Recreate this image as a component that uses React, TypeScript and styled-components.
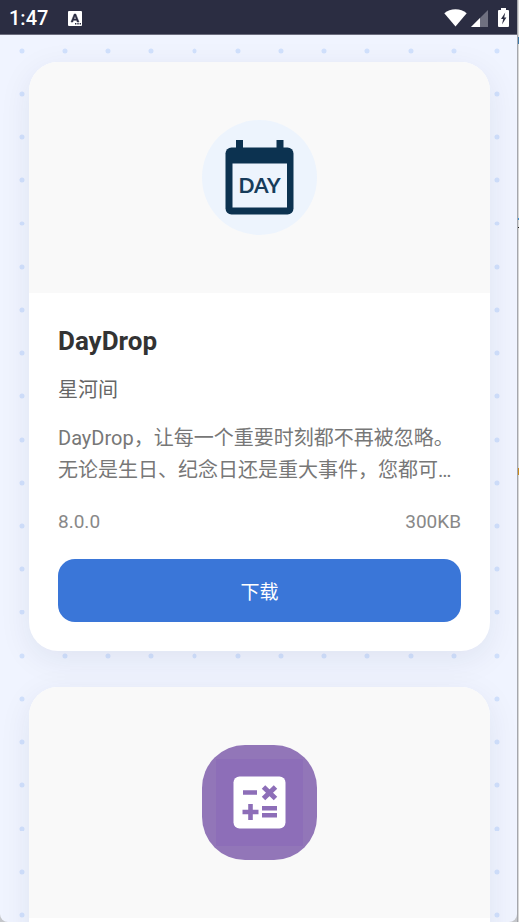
import React from "react";
import styled, { createGlobalStyle } from "styled-components";

const GlobalStyle = createGlobalStyle`
  * { box-sizing: border-box; }
  html, body, #root { height: 100%; }
  body {
    margin: 0;
    background: #c4c6ca;
    font-family: Roboto, "Noto Sans CJK SC", sans-serif;
  }
`;

const dotTile =
  "data:image/svg+xml," +
  encodeURIComponent(
    '<svg xmlns="http://www.w3.org/2000/svg" viewBox="0 0 40 40"><circle cx="20" cy="20" r="2.3" fill="#d1e1fd"/></svg>'
  );

const Desktop = styled.div`
  display: flex;
  height: 100vh;
  overflow: hidden;
  background: #c4c6ca;
`;

const Screen = styled.div`
  flex: 1;
  min-width: 0;
  display: flex;
  flex-direction: column;
  overflow: hidden;
  border-radius: 0 0 8px 8px;
  background: #f0f4ff;
`;

const WindowEdge = styled.div`
  width: 2px;
  border-left: 1px solid #a5a7ad;
  background:
    linear-gradient(#3d78a8, #3d78a8) 0 37px / 2px 7px no-repeat,
    linear-gradient(#3d8fd0, #3d8fd0) 0 218px / 2px 2px no-repeat,
    linear-gradient(#222, #222) 0 227px / 2px 1px no-repeat,
    linear-gradient(#c98a1c, #c98a1c) 0 468px / 2px 7px no-repeat,
    #d8d8d8;
`;

const StatusBar = styled.header`
  flex: none;
  display: flex;
  align-items: center;
  gap: 20px;
  height: 35px;
  padding: 2px 8px 0 9px;
  background: #2b2d42;
  border-bottom: 1px solid #6b6c7d;
  color: #fff;
`;

const Clock = styled.time`
  font-size: 20px;
  line-height: 24px;
  font-weight: 500;
`;

const StatusIcons = styled.div`
  display: flex;
  align-items: center;
  gap: 10px;
  margin-left: auto;
`;

const Reception = styled.div`
  display: flex;
  align-items: center;
  gap: 4px;
`;

const Feed = styled.main`
  flex: 1;
  display: flex;
  flex-direction: column;
  gap: 36px;
  padding: 27px 27px 0 29px;
  overflow: hidden;
  background-image: url("${dotTile}");
  background-size: 8.36% auto;
  background-position: 0 -6px;
`;

const Card = styled.article`
  flex: none;
  overflow: hidden;
  border-radius: 29px;
  background: #fff;
  box-shadow: 0 8px 32px rgba(31, 38, 75, 0.08);
`;

const Cover = styled.div`
  display: flex;
  align-items: center;
  justify-content: center;
  height: 231px;
  background: #f9f9f9;
`;

const AppIcon = styled.div<{ $color: string; $radius: string }>`
  width: 115px;
  height: 115px;
  overflow: hidden;
  border-radius: ${(p) => p.$radius};
  background: ${(p) => p.$color};

  svg { display: block; }
`;

const CardBody = styled.div`
  display: flex;
  flex-direction: column;
  padding: 29px;
`;

const Title = styled.h2`
  margin: 0 0 14px;
  color: #333;
  font-size: 26px;
  line-height: 38px;
  font-weight: 700;
`;

const Author = styled.p`
  margin: 0 0 16px;
  color: #666;
  font-size: 20px;
  line-height: 32px;
`;

const Description = styled.p`
  margin: 0 0 23px;
  color: #777;
  font-size: 20px;
  line-height: 32px;
`;

const Meta = styled.div`
  display: flex;
  justify-content: space-between;
  margin-bottom: 24px;
  color: #888;
  font-size: 19px;
  line-height: 26px;
`;

const DownloadButton = styled.button`
  height: 63px;
  border: 0;
  border-radius: 17px;
  background: #3a76d8;
  color: #fff;
  font: inherit;
  font-size: 19px;
  cursor: pointer;
`;

const KeyboardIcon = () => (
  <svg width="14" height="15" viewBox="0 0 14 15" aria-hidden="true">
    <rect width="14" height="15" rx="1" fill="#fff" />
    <path d="M3 11 6.200 3h1.600L11 11H9.200L8.600 9.300H5.400L4.800 11ZM5.900 7.900h2.200L7 4.900Z" fill="#2b2d42" stroke="#2b2d42" strokeWidth="0.500" fillRule="evenodd" />
    <path d="M7 12h1.400v1.500H7zM9.300 12h1.400v1.500H9.300zM11.600 12H13v1.500h-1.400z" fill="#2b2d42" />
  </svg>
);

const WifiIcon = () => (
  <svg width="23" height="18" viewBox="0 0 23 18" aria-hidden="true">
    <path d="M11.500 17.500.3 4.200C3.400 1.700 7.200.3 11.500.3s8.100 1.400 11.200 3.900Z" fill="#fff" />
  </svg>
);

const SignalIcon = () => (
  <svg width="17" height="17" viewBox="0 0 17 17" aria-hidden="true">
    <path d="M0 17 17 0v17Z" fill="#6f7080" />
    <path d="M0 17 9 8v9Z" fill="#fff" />
  </svg>
);

const BatteryIcon = () => (
  <svg width="11" height="20" viewBox="0 0 11 20" aria-hidden="true">
    <path d="M3 0h5v2h2q1 0 1 1v15q0 1-1 1H1q-1 0-1-1V3q0-1 1-1h2Z" fill="#fff" />
    <path d="M7.200 4.500 3 11h2.200l-1.200 5.500L8.400 9.500H6.200Z" fill="#2b2d42" />
  </svg>
);

const CalendarArt = () => (
  <svg width="115" height="115" viewBox="0 0 115 115" aria-hidden="true">
    <path d="M34 20h7v8h-7zM74.500 20h7v8h-7z" fill="#0c3250" />
    <rect x="23.500" y="27.500" width="68" height="67" rx="6" fill="#0c3250" />
    <path d="M30.500 43.500h54.500v44h-54.500z" fill="#edf4fd" />
    <text x="57.500" y="73" textAnchor="middle" fontFamily="Lato, sans-serif" fontWeight="700" fontSize="21" fill="#173c5a">
      DAY
    </text>
  </svg>
);

const CalculatorArt = () => (
  <svg width="115" height="115" viewBox="0 0 115 115" aria-hidden="true">
    <rect x="14" y="14" width="87" height="87" fill="#8d6eb8" />
    <rect x="31.500" y="31.500" width="52" height="52" rx="6" fill="#fff" />
    <g stroke="#8d6eb8" strokeWidth="4.600">
      <path d="M41 47.500h14M40.500 67h16M48.500 59v16M60 63.300h15M60 70.300h15" />
      <path d="m61.500 42 12 11.500M73.500 42l-12 11.500" strokeWidth="5" />
    </g>
  </svg>
);

export default function App() {
  return (
    <>
      <GlobalStyle />
      <Desktop>
        <Screen>
          <StatusBar>
            <Clock>1:47</Clock>
            <KeyboardIcon />
            <StatusIcons>
              <Reception>
                <WifiIcon />
                <SignalIcon />
              </Reception>
              <BatteryIcon />
            </StatusIcons>
          </StatusBar>
          <Feed>
            <Card>
              <Cover>
                <AppIcon $color="#edf4fd" $radius="50%">
                  <CalendarArt />
                </AppIcon>
              </Cover>
              <CardBody>
                <Title>DayDrop</Title>
                <Author>星河间</Author>
                <Description>
                  DayDrop，让每一个重要时刻都不再被忽略。无论是生日、纪念日还是重大事件，您都可…
                </Description>
                <Meta>
                  <span>8.0.0</span>
                  <span>300KB</span>
                </Meta>
                <DownloadButton type="button">下载</DownloadButton>
              </CardBody>
            </Card>
            <Card>
              <Cover>
                <AppIcon $color="#9276b8" $radius="43px">
                  <CalculatorArt />
                </AppIcon>
              </Cover>
              <CardBody />
            </Card>
          </Feed>
        </Screen>
        <WindowEdge />
      </Desktop>
    </>
  );
}
